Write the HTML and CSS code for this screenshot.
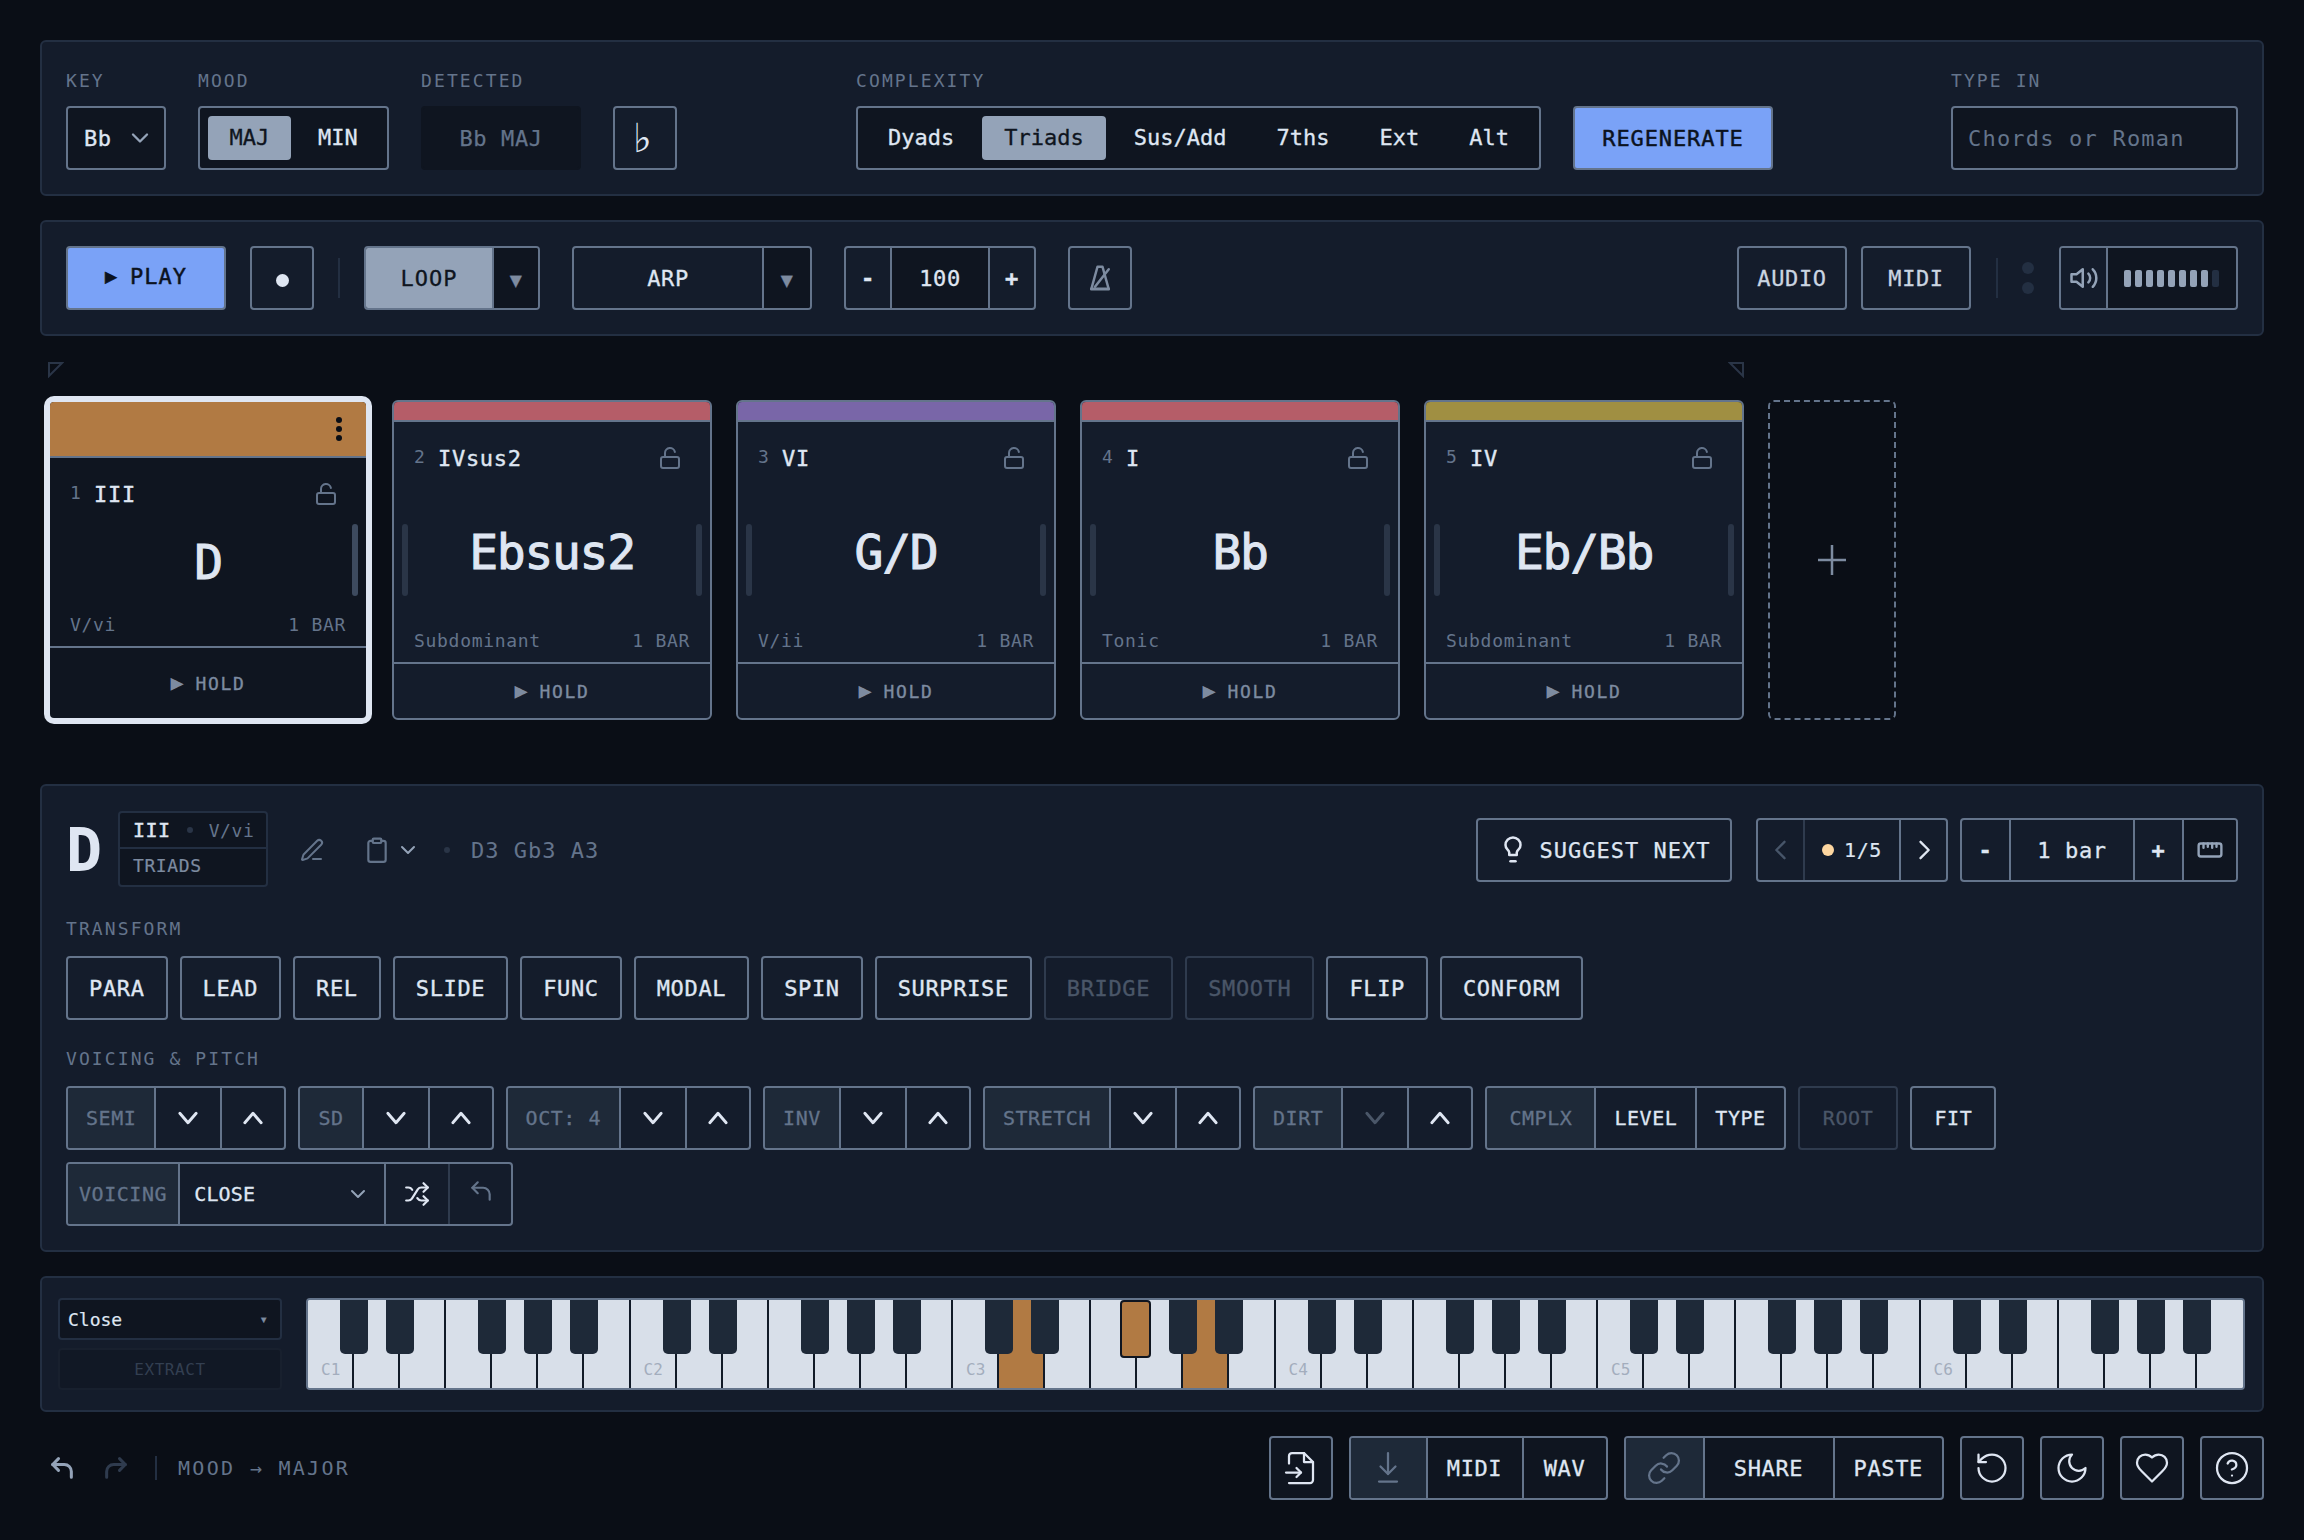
FILE: index.html
```html
<!DOCTYPE html>
<html lang="en">
<head>
<meta charset="utf-8">
<title>Chord Sketcher</title>
<link rel="stylesheet" href="styles.css">
</head>
<body>
<svg class="sprite" aria-hidden="true">
  <symbol id="i-down" viewBox="0 0 24 24"><path d="m5 8 7 8 7-8"/></symbol>
  <symbol id="i-up" viewBox="0 0 24 24"><path d="m5 16 7-8 7 8"/></symbol>
  <symbol id="i-chev" viewBox="0 0 24 24"><path d="m6 9 6 6 6-6"/></symbol>
  <symbol id="i-left" viewBox="0 0 24 24"><path d="m15 5-7 7 7 7"/></symbol>
  <symbol id="i-right" viewBox="0 0 24 24"><path d="m9 5 7 7-7 7"/></symbol>
  <symbol id="i-lock" viewBox="0 0 24 24"><rect x="3" y="11" width="18" height="11" rx="2"/><path d="M7 11V7a5 5 0 0 1 9.9-1"/></symbol>
  <symbol id="i-pen" viewBox="0 0 24 24"><path d="M13 21h8"/><path d="M21.17 6.81a1 1 0 0 0-3.98-3.99L3.84 16.17a2 2 0 0 0-.5.83l-1.32 4.35a.5.5 0 0 0 .62.62l4.35-1.32a2 2 0 0 0 .83-.5z"/></symbol>
  <symbol id="i-clip" viewBox="0 0 24 24"><rect x="8" y="1.5" width="8" height="4" rx="1"/><path d="M16 3.5h2a2 2 0 0 1 2 2V21a2 2 0 0 1-2 2H6a2 2 0 0 1-2-2V5.5a2 2 0 0 1 2-2h2"/></symbol>
  <symbol id="i-bulb" viewBox="0 0 24 24"><path d="M15 14c.2-1 .7-1.7 1.5-2.5 1-.9 1.5-2.2 1.5-3.5A6 6 0 0 0 6 8c0 1 .2 2.2 1.500 3.5.7.7 1.3 1.5 1.5 2.5v2h6z"/><path d="M10 21h4"/></symbol>
  <symbol id="i-ruler" viewBox="0 0 24 24"><rect x="1.5" y="6" width="21" height="12" rx="2"/><path d="M6 6v4M10 6v3M14 6v4M18 6v3"/></symbol>
  <symbol id="i-vol" viewBox="0 0 24 24"><path d="M11 5 6 9H2v6h4l5 4z"/><path d="M15.5 8.5a5 5 0 0 1 0 7"/><path d="M19 5a10 10 0 0 1 0 14"/></symbol>
  <symbol id="i-metro" viewBox="0 0 24 24"><path d="M10 3h4l5 18H5z"/><path d="M5 20.500h14" /><path d="M19 5 8 19"/></symbol>
  <symbol id="i-shuffle" viewBox="0 0 24 24"><path d="m18 14 4 4-4 4"/><path d="m18 2 4 4-4 4"/><path d="M2 18h2a4 4 0 0 0 3.3-1.7l5.4-8.6a4 4 0 0 1 3.3-1.7h6"/><path d="M2 6h2a4 4 0 0 1 3.6 2.2"/><path d="M22 18h-6a4 4 0 0 1-3.3-1.8l-.4-.4"/></symbol>
  <symbol id="i-undo" viewBox="0 0 24 24"><path d="M9 14 4 9l5-5"/><path d="M20 20v-5a6 6 0 0 0-6-6H4"/></symbol>
  <symbol id="i-file" viewBox="0 0 24 24"><path d="M4 9V4a2 2 0 0 1 2-2h8l6 6v12a2 2 0 0 1-2 2H4"/><path d="M14 2v6h6"/><path d="M2 15h10"/><path d="m9 18 3-3-3-3"/></symbol>
  <symbol id="i-dl" viewBox="0 0 24 24"><path d="M12 2v14"/><path d="m7 11 5 5 5-5"/><path d="M6 21h12"/></symbol>
  <symbol id="i-link" viewBox="0 0 24 24"><path d="M10 13a5 5 0 0 0 7.54.54l3-3a5 5 0 0 0-7.07-7.07l-1.72 1.71"/><path d="M14 11a5 5 0 0 0-7.54-.54l-3 3a5 5 0 0 0 7.07 7.07l1.71-1.71"/></symbol>
  <symbol id="i-reset" viewBox="0 0 24 24"><path d="M3 12a9 9 0 1 0 9-9 9.75 9.75 0 0 0-6.74 2.74L3 8"/><path d="M3 3v5h5"/></symbol>
  <symbol id="i-moon" viewBox="0 0 24 24"><path d="M12 3a6 6 0 0 0 9 9 9 9 0 1 1-9-9Z"/></symbol>
  <symbol id="i-heart" viewBox="0 0 24 24"><path d="M19 14c1.49-1.46 3-3.21 3-5.5A5.5 5.5 0 0 0 16.5 3c-1.76 0-3 .5-4.5 2-1.5-1.5-2.74-2-4.5-2A5.5 5.5 0 0 0 2 8.5c0 2.3 1.5 4.05 3 5.5l7 7Z"/></symbol>
  <symbol id="i-help" viewBox="0 0 24 24"><circle cx="12" cy="12" r="10"/><path d="M9.1 9a3 3 0 0 1 5.8 1c0 2-3 3-3 3"/><path d="M12 17h.01"/></symbol>
</svg>

<main class="app">
  <section class="panel top-panel">
    <div class="field">
      <span class="label">KEY</span>
      <div class="ctl key-select"><span class="med">Bb</span><svg class="ic ic-chev"><use href="#i-chev"/></svg></div>
    </div>
    <div class="field">
      <span class="label">MOOD</span>
      <div class="ctl seg-box">
        <span class="seg seg-mood active">MAJ</span>
        <span class="seg seg-mood">MIN</span>
      </div>
    </div>
    <div class="field">
      <span class="label">DETECTED</span>
      <div class="ctl detected">Bb MAJ</div>
    </div>
    <button class="ctl flat">♭</button>
    <div class="field complexity">
      <span class="label">COMPLEXITY</span>
      <div class="ctl seg-box">
        <span class="seg">Dyads</span>
        <span class="seg active">Triads</span>
        <span class="seg">Sus/Add</span>
        <span class="seg">7ths</span>
        <span class="seg">Ext</span>
        <span class="seg">Alt</span>
      </div>
    </div>
    <button class="ctl primary regen">REGENERATE</button>
    <div class="field type-in">
      <span class="label">TYPE IN</span>
      <input class="ctl type-input" placeholder="Chords or Roman">
    </div>
  </section>

  <section class="panel transport">
    <button class="ctl primary play"><span class="tri">▶</span> PLAY</button>
    <button class="ctl square rec"><i class="rec-dot"></i></button>
    <i class="vline"></i>
    <div class="ctl split loop"><span class="split-main on">LOOP</span><span class="split-arrow">▼</span></div>
    <div class="ctl split arp"><span class="split-main">ARP</span><span class="split-arrow">▼</span></div>
    <div class="ctl bpm"><span class="b-side">-</span><span class="b-val">100</span><span class="b-side">+</span></div>
    <button class="ctl square metro"><svg class="ic ic-30 dim-ic"><use href="#i-metro"/></svg></button>
    <span class="spacer"></span>
    <button class="ctl io">AUDIO</button>
    <button class="ctl io">MIDI</button>
    <i class="vline vline-r"></i>
    <span class="dots"><i></i><i></i></span>
    <div class="ctl volume">
      <span class="vol-ic"><svg class="ic ic-30 mid-ic"><use href="#i-vol"/></svg></span>
      <span class="vol-bars"><i></i><i></i><i></i><i></i><i></i><i></i><i></i><i></i><i class="off"></i></span>
    </div>
  </section>

  <div class="loop-marks">
    <svg class="mark" viewBox="0 0 16 16"><path d="M1 1h13L1 14z"/></svg>
    <svg class="mark" viewBox="0 0 16 16"><path d="M2 1h13v13z"/></svg>
  </div>

  <section class="cards">
    <article class="card selected">
      <div class="stripe c-orange"><svg class="kebab" viewBox="0 0 6 24"><circle cx="3" cy="3" r="3"/><circle cx="3" cy="12" r="3"/><circle cx="3" cy="21" r="3"/></svg></div>
      <div class="card-body">
        <div class="card-top"><span class="num">1</span><span class="roman">III</span><svg class="ic lock"><use href="#i-lock"/></svg></div>
        <div class="chord">D</div>
        <div class="card-foot"><span>V/vi</span><span>1 BAR</span></div>
      </div>
      <i class="handle right"></i>
      <div class="hold"><span class="hold-tri">▶</span> HOLD</div>
    </article>
    <article class="card">
      <div class="stripe c-red"></div>
      <div class="card-body">
        <div class="card-top"><span class="num">2</span><span class="roman">IVsus2</span><svg class="ic lock"><use href="#i-lock"/></svg></div>
        <div class="chord">Ebsus2</div>
        <div class="card-foot"><span>Subdominant</span><span>1 BAR</span></div>
      </div>
      <i class="handle left"></i><i class="handle right"></i>
      <div class="hold"><span class="hold-tri">▶</span> HOLD</div>
    </article>
    <article class="card">
      <div class="stripe c-purple"></div>
      <div class="card-body">
        <div class="card-top"><span class="num">3</span><span class="roman">VI</span><svg class="ic lock"><use href="#i-lock"/></svg></div>
        <div class="chord">G/D</div>
        <div class="card-foot"><span>V/ii</span><span>1 BAR</span></div>
      </div>
      <i class="handle left"></i><i class="handle right"></i>
      <div class="hold"><span class="hold-tri">▶</span> HOLD</div>
    </article>
    <article class="card">
      <div class="stripe c-red"></div>
      <div class="card-body">
        <div class="card-top"><span class="num">4</span><span class="roman">I</span><svg class="ic lock"><use href="#i-lock"/></svg></div>
        <div class="chord">Bb</div>
        <div class="card-foot"><span>Tonic</span><span>1 BAR</span></div>
      </div>
      <i class="handle left"></i><i class="handle right"></i>
      <div class="hold"><span class="hold-tri">▶</span> HOLD</div>
    </article>
    <article class="card">
      <div class="stripe c-olive"></div>
      <div class="card-body">
        <div class="card-top"><span class="num">5</span><span class="roman">IV</span><svg class="ic lock"><use href="#i-lock"/></svg></div>
        <div class="chord">Eb/Bb</div>
        <div class="card-foot"><span>Subdominant</span><span>1 BAR</span></div>
      </div>
      <i class="handle left"></i><i class="handle right"></i>
      <div class="hold"><span class="hold-tri">▶</span> HOLD</div>
    </article>
    <button class="add-card"><svg class="plus" viewBox="0 0 32 32"><path d="M16 1v30M2 16h28"/></svg></button>
  </section>

  <section class="panel editor">
    <header class="ed-head">
      <span class="ed-chord">D</span>
      <div class="ed-badge">
        <div class="ed-badge-top"><span class="ed-roman">III</span><i class="ed-dot"></i><span class="ed-func">V/vi</span></div>
        <div class="ed-badge-bot">TRIADS</div>
      </div>
      <svg class="ic ic-pen mid2-ic"><use href="#i-pen"/></svg>
      <svg class="ic ic-clip mid2-ic"><use href="#i-clip"/></svg>
      <svg class="ic ic-chev ic-chev2 mid2-ic"><use href="#i-chev"/></svg>
      <i class="ed-dot ed-dot2"></i>
      <span class="notes">D3 Gb3 A3</span>
      <span class="spacer"></span>
      <button class="ctl suggest"><svg class="ic ic-30"><use href="#i-bulb"/></svg>SUGGEST NEXT</button>
      <div class="ctl pager">
        <span class="pg-btn pg-prev"><svg class="ic ic-28"><use href="#i-left"/></svg></span>
        <span class="pg-val"><i class="pg-dot"></i>1/5</span>
        <span class="pg-btn pg-next"><svg class="ic ic-28"><use href="#i-right"/></svg></span>
      </div>
      <div class="ctl bars">
        <span class="bar-btn">-</span><span class="bar-val">1 bar</span><span class="bar-btn">+</span>
        <span class="bar-ruler"><svg class="ic ic-ruler mid-ic"><use href="#i-ruler"/></svg></span>
      </div>
    </header>

    <span class="label ed-label">TRANSFORM</span>
    <div class="btn-row">
      <button class="ctl tbtn">PARA</button>
      <button class="ctl tbtn">LEAD</button>
      <button class="ctl tbtn">REL</button>
      <button class="ctl tbtn">SLIDE</button>
      <button class="ctl tbtn">FUNC</button>
      <button class="ctl tbtn">MODAL</button>
      <button class="ctl tbtn">SPIN</button>
      <button class="ctl tbtn">SURPRISE</button>
      <button class="ctl tbtn off">BRIDGE</button>
      <button class="ctl tbtn off">SMOOTH</button>
      <button class="ctl tbtn">FLIP</button>
      <button class="ctl tbtn">CONFORM</button>
    </div>

    <span class="label ed-label">VOICING &amp; PITCH</span>
    <div class="btn-row">
      <div class="ctl stepper"><span class="st-label">SEMI</span><span class="st-btn"><svg class="ic ic-28 thick"><use href="#i-down"/></svg></span><span class="st-btn"><svg class="ic ic-28 thick"><use href="#i-up"/></svg></span></div>
      <div class="ctl stepper"><span class="st-label">SD</span><span class="st-btn"><svg class="ic ic-28 thick"><use href="#i-down"/></svg></span><span class="st-btn"><svg class="ic ic-28 thick"><use href="#i-up"/></svg></span></div>
      <div class="ctl stepper"><span class="st-label">OCT: 4</span><span class="st-btn"><svg class="ic ic-28 thick"><use href="#i-down"/></svg></span><span class="st-btn"><svg class="ic ic-28 thick"><use href="#i-up"/></svg></span></div>
      <div class="ctl stepper"><span class="st-label">INV</span><span class="st-btn"><svg class="ic ic-28 thick"><use href="#i-down"/></svg></span><span class="st-btn"><svg class="ic ic-28 thick"><use href="#i-up"/></svg></span></div>
      <div class="ctl stepper"><span class="st-label">STRETCH</span><span class="st-btn"><svg class="ic ic-28 thick"><use href="#i-down"/></svg></span><span class="st-btn"><svg class="ic ic-28 thick"><use href="#i-up"/></svg></span></div>
      <div class="ctl stepper"><span class="st-label">DIRT</span><span class="st-btn"><svg class="ic ic-28 thick dim-chev"><use href="#i-down"/></svg></span><span class="st-btn"><svg class="ic ic-28 thick"><use href="#i-up"/></svg></span></div>
      <div class="ctl stepper"><span class="st-label st-wide">CMPLX</span><span class="st-txt">LEVEL</span><span class="st-txt">TYPE</span></div>
      <button class="ctl sbtn sbtn-root off">ROOT</button>
      <button class="ctl sbtn">FIT</button>
    </div>
    <div class="btn-row row-voicing">
      <div class="ctl stepper">
        <span class="st-label st-voicing">VOICING</span>
        <span class="st-select"><span>CLOSE</span><svg class="ic ic-chev mid-ic"><use href="#i-chev"/></svg></span>
        <span class="st-icon"><svg class="ic ic-24w"><use href="#i-shuffle"/></svg></span>
        <span class="st-icon st-undo"><svg class="ic ic-24w mid2-ic"><use href="#i-undo"/></svg></span>
      </div>
    </div>
  </section>

  <section class="panel kb-panel">
    <div class="kb-side">
      <div class="kb-select"><span>Close</span><span class="kb-arrow">▾</span></div>
      <div class="kb-extract">EXTRACT</div>
    </div>
    <div class="keyboard">
      <div class="wk b"><span>C1</span></div><div class="wk b"></div><div class="wk"></div><div class="wk b"></div><div class="wk b"></div><div class="wk b"></div><div class="wk"></div>
      <div class="wk b"><span>C2</span></div><div class="wk b"></div><div class="wk"></div><div class="wk b"></div><div class="wk b"></div><div class="wk b"></div><div class="wk"></div>
      <div class="wk b"><span>C3</span></div><div class="wk b hit"></div><div class="wk"></div><div class="wk b hit-b"></div><div class="wk b"></div><div class="wk b hit"></div><div class="wk"></div>
      <div class="wk b"><span>C4</span></div><div class="wk b"></div><div class="wk"></div><div class="wk b"></div><div class="wk b"></div><div class="wk b"></div><div class="wk"></div>
      <div class="wk b"><span>C5</span></div><div class="wk b"></div><div class="wk"></div><div class="wk b"></div><div class="wk b"></div><div class="wk b"></div><div class="wk"></div>
      <div class="wk b"><span>C6</span></div><div class="wk b"></div><div class="wk"></div><div class="wk b"></div><div class="wk b"></div><div class="wk b"></div><div class="wk"></div>
    </div>
  </section>

  <footer class="foot">
    <div class="foot-left">
      <svg class="ic ic-28 mid-ic thick2"><use href="#i-undo"/></svg>
      <svg class="ic ic-28 redo"><use href="#i-undo"/></svg>
      <i class="foot-line"></i>
      <span class="history">MOOD → MAJOR</span>
    </div>
    <div class="foot-right">
      <button class="ctl fbtn"><svg class="ic ic-36"><use href="#i-file"/></svg></button>
      <div class="ctl fgroup">
        <span class="f-ic f-ic-dl"><svg class="ic ic-36 mid2-ic"><use href="#i-dl"/></svg></span>
        <span class="f-txt f-midi">MIDI</span><span class="f-txt f-wav">WAV</span>
      </div>
      <div class="ctl fgroup">
        <span class="f-ic"><svg class="ic ic-36 mid2-ic"><use href="#i-link"/></svg></span>
        <span class="f-txt f-share">SHARE</span><span class="f-txt f-paste">PASTE</span>
      </div>
      <button class="ctl fbtn"><svg class="ic ic-36"><use href="#i-reset"/></svg></button>
      <button class="ctl fbtn"><svg class="ic ic-36"><use href="#i-moon"/></svg></button>
      <button class="ctl fbtn"><svg class="ic ic-36"><use href="#i-heart"/></svg></button>
      <button class="ctl fbtn"><svg class="ic ic-36"><use href="#i-help"/></svg></button>
    </div>
  </footer>
</main>
</body>
</html>
```

FILE: styles.css
```css
* { box-sizing: border-box; }
html, body { margin: 0; padding: 0; }
body {
  width: 2304px;
  height: 1540px;
  background: #0a0e16;
  color: #dfe6f2;
  font-family: "DejaVu Sans Mono", "Liberation Mono", monospace;
  font-size: 22px;
  overflow: hidden;
}
button, input { font: inherit; color: inherit; padding: 0; margin: 0; }
i { display: block; }
.sprite { position: absolute; width: 0; height: 0; }
.app { padding: 40px 40px 0; display: flex; flex-direction: column; }
.spacer { flex: 1; }

.ic { width: 24px; height: 24px; fill: none; stroke: currentColor; stroke-width: 2; stroke-linecap: round; stroke-linejoin: round; flex: none; }
.ic-28 { width: 28px; height: 28px; }
.ic-30 { width: 30px; height: 30px; }
.ic-36 { width: 36px; height: 36px; stroke-width: 1.5; }
.ic-24w { width: 26px; height: 26px; }
.ic-ruler { width: 26px; height: 26px; stroke-width: 2.2; }
.thick { stroke-width: 2.5; }
.thick2 { stroke-width: 2.6; }
.mid-ic { color: #94a3b8; }
.mid2-ic { color: #64748b; }
.dim-ic { color: #7d8ba0; }

.panel { background: #141c2b; border: 2px solid #232f42; border-radius: 6px; }
.label { display: block; height: 28px; line-height: 28px; padding-top: 1px; font-size: 18px; letter-spacing: 2.1px; color: #64748b; margin-bottom: 12px; white-space: nowrap; }
.ctl { height: 64px; border: 2px solid #64748b; border-radius: 4px; background: #0f1520; letter-spacing: .62px; display: flex; align-items: center; justify-content: center; white-space: nowrap; }
button.ctl { cursor: pointer; }
.med { -webkit-text-stroke: .35px currentColor; }

.top-panel { height: 156px; padding: 24px; display: flex; align-items: flex-end; }
.field { display: flex; flex-direction: column; margin-right: 32px; }
.key-select { width: 100px; justify-content: space-between; padding: 0 10px 0 16px; }
.key-select .ic-chev { width: 28px; height: 28px; }
.ic-chev { color: #94a3b8; }
.seg-box { padding: 0 8px; gap: 6px; letter-spacing: 0; -webkit-text-stroke: .3px currentColor; }
.seg { height: 44px; line-height: 44px; padding: 0 22px; border-radius: 4px; }
.seg-mood { padding: 0 21.4px; }
.seg.active { background: #94a3b8; color: #0f1520; }
.detected { width: 160px; border-color: #0f1520; color: #64748b; -webkit-text-stroke: .25px currentColor; }
.flat { width: 64px; margin-right: 179px; padding-right: 6px; background: #141c2b; font-size: 40px; font-family: "DejaVu Sans", sans-serif; letter-spacing: 0; }
.complexity { margin-right: 32px; }
.primary { background: #7aa2f7; color: #0b1220; -webkit-text-stroke: .45px currentColor; }
.regen { width: 200px; letter-spacing: .9px; }
.type-in { margin-left: auto; margin-right: 0; }
.type-input { width: 287px; padding: 0 15px; outline: none; display: block; letter-spacing: 1.2px; }
.type-input::placeholder { color: #64748b; opacity: 1; }

.transport { margin-top: 24px; height: 116px; padding: 24px; display: flex; align-items: center; }
.play { width: 160px; gap: 12px; padding-bottom: 4px; letter-spacing: 1px; }
.play .tri { font-size: 20px; }
.square { width: 64px; background: #141c2b; }
.rec { margin-left: 24px; }
.rec-dot { width: 13px; height: 13px; border-radius: 50%; background: #dfe6f2; margin-top: 4px; }
.vline { width: 2px; height: 40px; background: #232f42; margin: 0 24px; }
.split { padding: 0; overflow: hidden; background: #141c2b; -webkit-text-stroke: .3px currentColor; align-items: stretch; }
.split-main { display: flex; align-items: center; justify-content: center; flex: 1; border-right: 2px solid #64748b; }
.split-main.on { background: #94a3b8; color: #0f1520; letter-spacing: 1px; }
.split-arrow { width: 44px; background: #0f1520; color: #7d8ba0; font-size: 20px; display: flex; align-items: center; justify-content: center; padding-top: 3px; }
.arp .split-arrow { width: 46px; }
.loop { width: 176px; }
.arp { width: 240px; margin-left: 32px; }
.bpm { width: 192px; margin-left: 32px; padding: 0; align-items: stretch; overflow: hidden; background: #141c2b; -webkit-text-stroke: .35px currentColor; }
.b-side { width: 44px; display: flex; align-items: center; justify-content: center; font-weight: 700; }
.b-val { flex: 1; display: flex; align-items: center; justify-content: center; background: #0f1520; border-left: 2px solid #64748b; border-right: 2px solid #64748b; }
.metro { margin-left: 32px; }
.io { width: 110px; margin-left: 14px; background: #141c2b; color: #cbd5e1; -webkit-text-stroke: .3px currentColor; }
.vline-r { margin: 0 24px 0 25px; }
.dots { display: flex; flex-direction: column; gap: 8px; width: 12px; margin-right: 25px; }
.dots i { width: 12px; height: 12px; border-radius: 50%; background: #232f42; }
.volume { width: 179px; padding: 0; align-items: stretch; overflow: hidden; }
.vol-ic { width: 47px; display: flex; align-items: center; justify-content: center; border-right: 2px solid #64748b; background: #141c2b; }
.vol-bars { flex: 1; display: flex; align-items: center; gap: 4.5px; padding-left: 16px; }
.vol-bars i { width: 6.5px; height: 17px; border-radius: 2px; background: #94a3b8; }
.vol-bars i.off { background: #232f42; }

.loop-marks { margin: 24px 0 0 8px; width: 1696px; height: 40px; display: flex; justify-content: space-between; align-items: flex-start; }
.mark { width: 16px; height: 16px; margin-top: 2px; fill: none; stroke: #2a3547; stroke-width: 2; }

.cards { margin-left: 8px; display: flex; gap: 24px; height: 320px; }
.card { position: relative; width: 320px; height: 320px; display: flex; flex-direction: column; background: #141c2b; border: 2px solid #64748b; border-radius: 6px; overflow: hidden; }
.stripe { height: 20px; border-bottom: 2px solid #64748b; flex: none; display: flex; justify-content: flex-end; align-items: center; }
.c-red { background: #b55d68; }
.c-purple { background: #7966a8; }
.c-olive { background: #a08f42; }
.c-orange { background: #b17a43; }
.card-body { flex: 1; display: flex; flex-direction: column; padding: 24px 20px 9px; min-height: 0; }
.card-top { height: 24px; display: flex; align-items: center; }
.num { font-size: 18px; color: #64748b; width: 24px; margin-top: -4px; flex: none; }
.roman { font-size: 22px; letter-spacing: .7px; flex: 1; -webkit-text-stroke: .4px currentColor; }
.lock { color: #64748b; margin-right: 8px; }
.chord { flex: 1; display: flex; align-items: center; justify-content: center; padding-top: 5px; font-size: 48px; letter-spacing: -1.3px; -webkit-text-stroke: 1px currentColor; }
.card-foot { height: 24px; line-height: 24px; display: flex; justify-content: space-between; font-size: 18px; letter-spacing: .7px; color: #64748b; }
.hold { height: 56px; flex: none; border-top: 2px solid #64748b; display: flex; align-items: center; justify-content: center; gap: 10px; font-size: 18px; letter-spacing: 1.7px; color: #7d8ba0; -webkit-text-stroke: .35px currentColor; }
.hold-tri { font-size: 22px; -webkit-text-stroke: 0; line-height: 1; }
.handle { position: absolute; top: 122px; width: 6px; height: 72px; border-radius: 3px; background: #2a3547; }
.handle.left { left: 8px; }
.handle.right { right: 8px; }
.selected { background: #0f1520; border-color: #dfe6f2; box-shadow: 0 0 0 4px #dfe6f2; }
.selected .stripe { height: 56px; padding-right: 24px; }
.selected .hold { height: 72px; }
.selected .handle { background: #3d4a5e; }
.kebab { width: 6px; height: 24px; fill: #0a0e16; }
.add-card { width: 128px; height: 320px; background: transparent; border: 2px dashed #64748b; border-radius: 6px; display: flex; align-items: center; justify-content: center; }
.plus { width: 32px; height: 32px; fill: none; stroke: #7d8ba0; stroke-width: 2.5; }

.editor { margin-top: 64px; height: 468px; padding: 24px; display: flex; flex-direction: column; }
.ed-head { height: 80px; display: flex; align-items: center; }
.ed-chord { width: 52px; font-size: 60px; font-weight: 700; }
.ed-badge { width: 150px; height: 76px; border: 2px solid #232f42; border-radius: 4px; background: #0f1520; margin-top: -2px; overflow: hidden; }
.ed-badge-top { height: 36px; display: flex; align-items: center; padding-left: 13px; border-bottom: 2px solid #232f42; }
.ed-roman { font-size: 20px; letter-spacing: .5px; -webkit-text-stroke: .45px currentColor; }
.ed-dot { width: 6px; height: 6px; border-radius: 50%; background: #2a3547; }
.ed-badge-top .ed-dot { margin: 0 16px; }
.ed-func { font-size: 18px; letter-spacing: .6px; color: #64748b; }
.ed-badge-bot { height: 36px; line-height: 34px; padding-left: 13px; font-size: 18px; letter-spacing: .6px; color: #7d8ba0; -webkit-text-stroke: .2px currentColor; }
.ic-pen { margin-left: 32px; }
.ic-clip { margin-left: 40px; width: 26px; height: 26px; }
.ic-chev2 { margin-left: 6px; }
.ed-dot2 { margin: 0 21px 0 24px; }
.notes { letter-spacing: 1px; color: #64748b; }
.suggest { width: 256px; gap: 12px; background: #141c2b; letter-spacing: 1px; -webkit-text-stroke: .25px currentColor; }
.pager { width: 192px; margin-left: 24px; padding: 0; align-items: stretch; background: #141c2b; overflow: hidden; }
.pg-btn { width: 47px; display: flex; align-items: center; justify-content: center; }
.pg-prev { color: #475569; border-right: 2px solid #2f3b4e; }
.pg-val { flex: 1; display: flex; align-items: center; justify-content: center; gap: 10px; font-size: 20px; letter-spacing: .6px; -webkit-text-stroke: .2px currentColor; }
.pg-dot { width: 12px; height: 12px; border-radius: 50%; background: #fdd6a0; }
.pg-next { border-left: 2px solid #64748b; }
.bars { width: 278px; margin-left: 12px; padding: 0; align-items: stretch; background: #141c2b; overflow: hidden; -webkit-text-stroke: .3px currentColor; }
.bar-btn { width: 47px; display: flex; align-items: center; justify-content: center; font-weight: 700; }
.bar-val { width: 126px; display: flex; align-items: center; justify-content: center; border-left: 2px solid #64748b; border-right: 2px solid #64748b; }
.bar-ruler { flex: 1; display: flex; align-items: center; justify-content: center; background: #0f1520; border-left: 2px solid #64748b; -webkit-text-stroke: 0; }

.ed-label { margin: 24px 0 14px; }
.btn-row { display: flex; gap: 12px; }
.row-voicing { margin-top: 12px; }
.tbtn { background: #141c2b; padding: 0 21px; letter-spacing: .64px; -webkit-text-stroke: .35px currentColor; }
.off { border-color: #2f3b4e; color: #4a5668; }
.stepper { padding: 0; align-items: stretch; background: #141c2b; overflow: hidden; font-size: 20px; letter-spacing: .55px; }
.st-label { display: flex; align-items: center; padding: 0 18px; background: #1e2938; color: #64748b; -webkit-text-stroke: .3px currentColor; }
.st-wide { padding: 0 22px; }
.st-voicing { padding: 0 11px; }
.st-btn { width: 66px; display: flex; align-items: center; justify-content: center; border-left: 2px solid #64748b; }
.st-btn:last-child { width: 64px; }
.dim-chev { color: #4a5668; }
.st-txt { display: flex; align-items: center; padding: 0 18px; border-left: 2px solid #64748b; -webkit-text-stroke: .3px currentColor; }
.sbtn { font-size: 20px; background: #141c2b; padding: 0 22px; -webkit-text-stroke: .3px currentColor; }
.sbtn-root { padding: 0 23px; }
.st-select { width: 206px; display: flex; align-items: center; justify-content: space-between; padding: 0 14px; border-left: 2px solid #64748b; letter-spacing: .2px; -webkit-text-stroke: .3px currentColor; }
.st-icon { width: 64px; display: flex; align-items: center; justify-content: center; border-left: 2px solid #64748b; }
.st-undo { border-left-color: #2f3b4e; width: 63px; padding-bottom: 6px; }

.kb-panel { margin-top: 24px; height: 136px; padding: 20px 17px 20px 16px; display: flex; gap: 24px; }
.kb-side { width: 224px; display: flex; flex-direction: column; gap: 8px; }
.kb-select { height: 42px; border: 2px solid #232f42; border-radius: 4px; background: #0f1520; display: flex; align-items: center; justify-content: space-between; padding: 0 12px 0 8px; font-size: 18px; -webkit-text-stroke: .2px currentColor; }
.kb-arrow { font-size: 14px; color: #7d8ba0; }
.kb-extract { height: 42px; border: 2px solid #18202e; border-radius: 4px; background: #111825; display: flex; align-items: center; justify-content: center; font-size: 16px; letter-spacing: .6px; color: #333f51; }
.keyboard { flex: 1; height: 92px; display: grid; grid-template-columns: repeat(42, 1fr); background: #d8dfe9; border: 2px solid #64748b; border-radius: 4px; overflow: hidden; }
.wk { position: relative; background: #d8dfe9; border-right: 2px solid #111a27; }
.wk:last-child { border-right: 0; }
.wk span { position: absolute; left: 13px; bottom: 8px; font-size: 16px; line-height: 20px; color: #a3adbd; }
.wk.b::after { content: ""; position: absolute; z-index: 1; top: 0; right: -16px; width: 28px; height: 54px; background: #1e2938; border-radius: 0 0 5px 5px; }
.hit { background: #b17a43; }
.hit-b::after { background: #b17a43 !important; width: 27px !important; border: 2px solid #0f1520; border-radius: 4px !important; }

.foot { margin-top: 24px; height: 64px; display: flex; justify-content: space-between; align-items: center; }
.foot-left { display: flex; align-items: center; padding-left: 8px; }
.redo { transform: scaleX(-1); color: #2f3b4e; margin-left: 26px; stroke-width: 2.6; }
.foot-line { width: 2px; height: 24px; background: #232f42; margin: 0 21px 0 25px; }
.history { font-size: 20px; letter-spacing: 2.3px; color: #64748b; }
.foot-right { display: flex; gap: 16px; }
.fbtn { width: 64px; }
.fgroup { padding: 0; align-items: stretch; overflow: hidden; -webkit-text-stroke: .3px currentColor; }
.f-ic { width: 77px; display: flex; align-items: center; justify-content: center; background: #1e2938; -webkit-text-stroke: 0; }
.f-ic-dl { width: 75px; }
.f-txt { display: flex; align-items: center; justify-content: center; border-left: 2px solid #64748b; }
.f-midi { width: 96px; }
.f-wav { width: 84px; }
.f-share { width: 130px; }
.f-paste { width: 109.5px; }
```
